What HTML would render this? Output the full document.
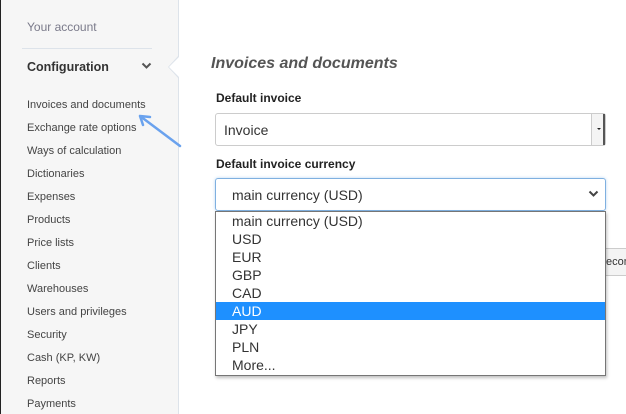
<!DOCTYPE html>
<html><head><meta charset="utf-8"><style>
*{margin:0;padding:0;box-sizing:border-box}
body{width:626px;height:414px;overflow:hidden;background:#fff;font-family:"Liberation Sans",Arial,sans-serif;position:relative}
.sb{position:absolute;left:0;top:0;width:179px;height:414px;background:#f6f6f6;border-right:1px solid #dde3ea;border-left:1px solid #222}
.acc{position:absolute;left:26px;top:20px;font-size:12px;color:#7a7a8a}
.hr{position:absolute;left:21px;top:48px;width:130px;border-top:1px solid #dde3ea}
.cfg{position:absolute;left:26px;top:60px;font-size:12.5px;font-weight:bold;color:#333}
.chev{position:absolute;left:140px;top:62px}
.it{position:absolute;left:26px;font-size:11px;color:#444}
.notch{position:absolute;left:168px;top:55px;width:0;height:0;border-top:12px solid transparent;border-bottom:12px solid transparent;border-right:11px solid #dde3ea}
.notch2{position:absolute;left:169px;top:56px;width:0;height:0;border-top:11px solid transparent;border-bottom:11px solid transparent;border-right:11px solid #fff}
h2{position:absolute;left:211px;top:55px;font-size:16px;font-style:italic;font-weight:bold;color:#555}
.lbl{position:absolute;left:216px;font-size:12px;font-weight:bold;color:#222}
.sel1{position:absolute;left:215px;top:113px;width:391px;height:33px;border:1px solid #ccc;border-radius:3px;font-size:14px;color:#333;padding:8px 8px}
.sel1 .b{position:absolute;right:0;top:0;width:14px;height:31px;border-left:1px solid #ccc;border-right:2px solid #555;background:#f4f4f4}
.sel1 .b:after{content:"";position:absolute;left:5px;top:14px;border-left:2px solid transparent;border-right:2px solid transparent;border-top:2px solid #222}
.sel2{position:absolute;left:215px;top:178px;width:391px;height:33px;border:1px solid #7fb0e0;border-radius:3px;font-size:14px;color:#333;padding:8px 16px;box-shadow:0 0 3px #bcd8f3}
.sel2 svg{position:absolute;right:6px;top:11px}
.dd{position:absolute;left:215px;top:211px;width:391px;height:165px;border:1px solid #767676;background:#fff;box-shadow:1px 2px 3px rgba(0,0,0,.25);font-size:14px;color:#333}
.dd div{height:18px;line-height:18px;padding-left:16px}
.dd .s{background:#1e90ff;color:#fff}
.btn{position:absolute;left:605px;top:248px;width:21px;height:28px;border:1px solid #ccc;border-right:none;background:#f4f4f4;font-size:11px;color:#333;line-height:26px;overflow:hidden}
</style></head><body>
<div class="sb">
<div class="acc">Your account</div>
<div class="hr"></div>
<div class="cfg">Configuration</div>
<svg class="chev" width="11" height="8" viewBox="0 0 11 8"><path d="M1.5 1.5L5.5 5.5L9.5 1.5" stroke="#555" stroke-width="2" fill="none"/></svg>
<div class="it" style="top:99px">Invoices and documents</div>
<div class="it" style="top:122px">Exchange rate options</div>
<div class="it" style="top:145px">Ways of calculation</div>
<div class="it" style="top:168px">Dictionaries</div>
<div class="it" style="top:191px">Expenses</div>
<div class="it" style="top:214px">Products</div>
<div class="it" style="top:237px">Price lists</div>
<div class="it" style="top:260px">Clients</div>
<div class="it" style="top:283px">Warehouses</div>
<div class="it" style="top:306px">Users and privileges</div>
<div class="it" style="top:329px">Security</div>
<div class="it" style="top:352px">Cash (KP, KW)</div>
<div class="it" style="top:375px">Reports</div>
<div class="it" style="top:398px">Payments</div>
</div>
<div class="notch"></div><div class="notch2"></div>
<svg style="position:absolute;left:135px;top:110px" width="50" height="40" viewBox="0 0 50 40"><path d="M5 6L45 36M5 6L15 7M5 6L8 15" stroke="#6aa2ee" stroke-width="2.5" fill="none" stroke-linecap="round"/></svg>
<h2>Invoices and documents</h2>
<div class="lbl" style="top:91px">Default invoice</div>
<div class="sel1">Invoice<div class="b"></div></div>
<div class="lbl" style="top:157px">Default invoice currency</div>
<div class="btn">econ</div>
<div class="sel2">main currency (USD)<svg width="11" height="8" viewBox="0 0 11 8"><path d="M1.5 1.5L5.5 5.5L9.5 1.5" stroke="#444" stroke-width="2" fill="none"/></svg></div>
<div class="dd">
<div>main currency (USD)</div><div>USD</div><div>EUR</div><div>GBP</div><div>CAD</div><div class="s">AUD</div><div>JPY</div><div>PLN</div><div>More...</div>
</div>
</body></html>
